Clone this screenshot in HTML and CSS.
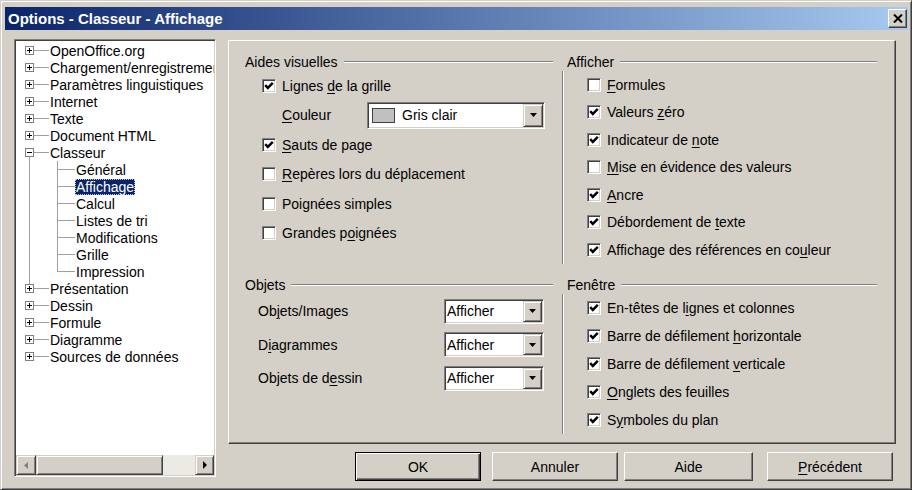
FILE: index.html
```html
<!DOCTYPE html>
<html lang="fr">
<head>
<meta charset="utf-8">
<title>Options - Classeur - Affichage</title>
<link rel="stylesheet" href="styles.css">
</head>
<body>
<div class="window">
  <div class="titlebar">
    <span class="title">Options - Classeur - Affichage</span>
    <span class="close"><svg width="10" height="9" viewBox="0 0 10 9"><path d="M1 0.5 L9 8.5 M9 0.5 L1 8.5" stroke="#000" stroke-width="2" fill="none"/></svg></span>
  </div>
  <div class="client">
    <div class="tree">
      <div class="tree-list">
        <div class="row"><span class="exp"><span class="box"><svg width="7" height="7" viewBox="0 0 7 7"><rect x="1" y="3" width="5" height="1"/><rect x="3" y="1" width="1" height="5"/></svg></span></span><span class="hl"></span><span class="lbl">OpenOffice.org</span></div>
        <div class="row"><span class="exp"><span class="box"><svg width="7" height="7" viewBox="0 0 7 7"><rect x="1" y="3" width="5" height="1"/><rect x="3" y="1" width="1" height="5"/></svg></span></span><span class="hl"></span><span class="lbl">Chargement/enregistrement</span></div>
        <div class="row"><span class="exp"><span class="box"><svg width="7" height="7" viewBox="0 0 7 7"><rect x="1" y="3" width="5" height="1"/><rect x="3" y="1" width="1" height="5"/></svg></span></span><span class="hl"></span><span class="lbl">Paramètres linguistiques</span></div>
        <div class="row"><span class="exp"><span class="box"><svg width="7" height="7" viewBox="0 0 7 7"><rect x="1" y="3" width="5" height="1"/><rect x="3" y="1" width="1" height="5"/></svg></span></span><span class="hl"></span><span class="lbl">Internet</span></div>
        <div class="row"><span class="exp"><span class="box"><svg width="7" height="7" viewBox="0 0 7 7"><rect x="1" y="3" width="5" height="1"/><rect x="3" y="1" width="1" height="5"/></svg></span></span><span class="hl"></span><span class="lbl">Texte</span></div>
        <div class="row"><span class="exp"><span class="box"><svg width="7" height="7" viewBox="0 0 7 7"><rect x="1" y="3" width="5" height="1"/><rect x="3" y="1" width="1" height="5"/></svg></span></span><span class="hl"></span><span class="lbl">Document HTML</span></div>
        <div class="row"><span class="exp down"><span class="box"><svg width="7" height="7" viewBox="0 0 7 7"><rect x="1" y="3" width="5" height="1"/></svg></span></span><span class="hl"></span><span class="lbl">Classeur</span></div>
        <div class="row"><span class="vg"></span><span class="br"></span><span class="lbl">Général</span></div>
        <div class="row"><span class="vg"></span><span class="br"></span><span class="lbl sel">Affichage</span></div>
        <div class="row"><span class="vg"></span><span class="br"></span><span class="lbl">Calcul</span></div>
        <div class="row"><span class="vg"></span><span class="br"></span><span class="lbl">Listes de tri</span></div>
        <div class="row"><span class="vg"></span><span class="br"></span><span class="lbl">Modifications</span></div>
        <div class="row"><span class="vg"></span><span class="br"></span><span class="lbl">Grille</span></div>
        <div class="row"><span class="vg"></span><span class="br last"></span><span class="lbl">Impression</span></div>
        <div class="row"><span class="exp up"><span class="box"><svg width="7" height="7" viewBox="0 0 7 7"><rect x="1" y="3" width="5" height="1"/><rect x="3" y="1" width="1" height="5"/></svg></span></span><span class="hl"></span><span class="lbl">Présentation</span></div>
        <div class="row"><span class="exp"><span class="box"><svg width="7" height="7" viewBox="0 0 7 7"><rect x="1" y="3" width="5" height="1"/><rect x="3" y="1" width="1" height="5"/></svg></span></span><span class="hl"></span><span class="lbl">Dessin</span></div>
        <div class="row"><span class="exp"><span class="box"><svg width="7" height="7" viewBox="0 0 7 7"><rect x="1" y="3" width="5" height="1"/><rect x="3" y="1" width="1" height="5"/></svg></span></span><span class="hl"></span><span class="lbl">Formule</span></div>
        <div class="row"><span class="exp"><span class="box"><svg width="7" height="7" viewBox="0 0 7 7"><rect x="1" y="3" width="5" height="1"/><rect x="3" y="1" width="1" height="5"/></svg></span></span><span class="hl"></span><span class="lbl">Diagramme</span></div>
        <div class="row"><span class="exp"><span class="box"><svg width="7" height="7" viewBox="0 0 7 7"><rect x="1" y="3" width="5" height="1"/><rect x="3" y="1" width="1" height="5"/></svg></span></span><span class="hl"></span><span class="lbl">Sources de données</span></div>
      </div>
      <div class="hscroll">
        <span class="sb-btn sb-left"><svg width="4" height="7" viewBox="0 0 4 7"><path d="M4 0 L0 3.5 L4 7 Z" fill="#808080"/></svg></span>
        <span class="thumb"></span>
        <span class="track"></span>
        <span class="sb-btn sb-right"><svg width="4" height="8" viewBox="0 0 4 8"><path d="M0 0 L4 4 L0 8 Z" fill="#000"/></svg></span>
      </div>
    </div>

    <div class="main">
      <div class="panel">
        <div class="group">
          <div class="gh">Aides visuelles</div>
          <div class="gbody gbody-left">
            <div class="crow crow-l"><span class="cb on"><svg width="10" height="10" viewBox="0 0 10 10"><path d="M1.2 4.1 L3.8 6.9 L8.8 1.8" stroke="#000" stroke-width="2.4" fill="none"/></svg></span><span>Lignes <u>d</u>e la grille</span></div>
            <div class="crow crow-l"><span class="clabel"><u>C</u>ouleur</span>
              <span class="combo combo-color"><span class="cval"><span class="swatch"></span>Gris clair</span><span class="cbtn"><svg width="7" height="4" viewBox="0 0 7 4"><path d="M0 0 H7 L3.5 4 Z" fill="#000"/></svg></span></span>
            </div>
            <div class="crow crow-l"><span class="cb on"><svg width="10" height="10" viewBox="0 0 10 10"><path d="M1.2 4.1 L3.8 6.9 L8.8 1.8" stroke="#000" stroke-width="2.4" fill="none"/></svg></span><span><u>S</u>auts de page</span></div>
            <div class="crow crow-l"><span class="cb"></span><span><u>R</u>epères lors du déplacement</span></div>
            <div class="crow crow-l"><span class="cb"></span><span>Poi<u>g</u>nées simples</span></div>
            <div class="crow crow-l"><span class="cb"></span><span>Grandes p<u>o</u>ignées</span></div>
          </div>
        </div>

        <div class="group group-right">
          <div class="gh">Afficher</div>
          <div class="gbody gbody-right">
            <div class="crow crow-r"><span class="cb"></span><span><u>F</u>ormules</span></div>
            <div class="crow crow-r"><span class="cb on"><svg width="10" height="10" viewBox="0 0 10 10"><path d="M1.2 4.1 L3.8 6.9 L8.8 1.8" stroke="#000" stroke-width="2.4" fill="none"/></svg></span><span>Valeurs <u>z</u>éro</span></div>
            <div class="crow crow-r"><span class="cb on"><svg width="10" height="10" viewBox="0 0 10 10"><path d="M1.2 4.1 L3.8 6.9 L8.8 1.8" stroke="#000" stroke-width="2.4" fill="none"/></svg></span><span>Indicateur de <u>n</u>ote</span></div>
            <div class="crow crow-r"><span class="cb"></span><span><u>M</u>ise en évidence des valeurs</span></div>
            <div class="crow crow-r"><span class="cb on"><svg width="10" height="10" viewBox="0 0 10 10"><path d="M1.2 4.1 L3.8 6.9 L8.8 1.8" stroke="#000" stroke-width="2.4" fill="none"/></svg></span><span><u>A</u>ncre</span></div>
            <div class="crow crow-r"><span class="cb on"><svg width="10" height="10" viewBox="0 0 10 10"><path d="M1.2 4.1 L3.8 6.9 L8.8 1.8" stroke="#000" stroke-width="2.4" fill="none"/></svg></span><span>Débordement de <u>t</u>exte</span></div>
            <div class="crow crow-r"><span class="cb on"><svg width="10" height="10" viewBox="0 0 10 10"><path d="M1.2 4.1 L3.8 6.9 L8.8 1.8" stroke="#000" stroke-width="2.4" fill="none"/></svg></span><span>Affichage des références en co<u>u</u>leur</span></div>
          </div>
        </div>

        <div class="group">
          <div class="gh">Objets</div>
          <div class="gbody gbody-obj">
            <div class="orow"><span class="olabel">Ob<u>j</u>ets/Images</span><span class="combo combo-sm"><span class="cval">Afficher</span><span class="cbtn"><svg width="7" height="4" viewBox="0 0 7 4"><path d="M0 0 H7 L3.5 4 Z" fill="#000"/></svg></span></span></div>
            <div class="orow"><span class="olabel">D<u>i</u>agrammes</span><span class="combo combo-sm"><span class="cval">Afficher</span><span class="cbtn"><svg width="7" height="4" viewBox="0 0 7 4"><path d="M0 0 H7 L3.5 4 Z" fill="#000"/></svg></span></span></div>
            <div class="orow"><span class="olabel">Objets de d<u>e</u>ssin</span><span class="combo combo-sm"><span class="cval">Afficher</span><span class="cbtn"><svg width="7" height="4" viewBox="0 0 7 4"><path d="M0 0 H7 L3.5 4 Z" fill="#000"/></svg></span></span></div>
          </div>
        </div>

        <div class="group group-right">
          <div class="gh">Fenêtre</div>
          <div class="gbody gbody-right">
            <div class="crow crow-f"><span class="cb on"><svg width="10" height="10" viewBox="0 0 10 10"><path d="M1.2 4.1 L3.8 6.9 L8.8 1.8" stroke="#000" stroke-width="2.4" fill="none"/></svg></span><span>En-têtes de l<u>i</u>gnes et colonnes</span></div>
            <div class="crow crow-f"><span class="cb on"><svg width="10" height="10" viewBox="0 0 10 10"><path d="M1.2 4.1 L3.8 6.9 L8.8 1.8" stroke="#000" stroke-width="2.4" fill="none"/></svg></span><span>Barre de défilement <u>h</u>orizontale</span></div>
            <div class="crow crow-f"><span class="cb on"><svg width="10" height="10" viewBox="0 0 10 10"><path d="M1.2 4.1 L3.8 6.9 L8.8 1.8" stroke="#000" stroke-width="2.4" fill="none"/></svg></span><span>Barre de défilement <u>v</u>erticale</span></div>
            <div class="crow crow-f"><span class="cb on"><svg width="10" height="10" viewBox="0 0 10 10"><path d="M1.2 4.1 L3.8 6.9 L8.8 1.8" stroke="#000" stroke-width="2.4" fill="none"/></svg></span><span><u>O</u>nglets des feuilles</span></div>
            <div class="crow crow-f"><span class="cb on"><svg width="10" height="10" viewBox="0 0 10 10"><path d="M1.2 4.1 L3.8 6.9 L8.8 1.8" stroke="#000" stroke-width="2.4" fill="none"/></svg></span><span>S<u>y</u>mboles du plan</span></div>
          </div>
        </div>
      </div>

      <div class="buttons">
        <span class="btn btn-ok">OK</span>
        <span class="btn btn-cancel">Annuler</span>
        <span class="btn btn-help">Aide</span>
        <span class="btn btn-back"><span><u>P</u>récédent</span></span>
      </div>
    </div>
  </div>
</div>
</body>
</html>
```

FILE: styles.css
```css
* { box-sizing: border-box; }
html, body { margin: 0; padding: 0; }
body {
  width: 912px;
  height: 490px;
  overflow: hidden;
  background: #d4d0c8;
  font-family: "Liberation Sans", Arial, sans-serif;
  font-size: 14px;
  color: #000;
}
u { text-decoration: underline; text-underline-offset: 2px; }

.window {
  width: 912px;
  height: 490px;
  display: flex;
  flex-direction: column;
  background: #d4d0c8;
  border: 1px solid;
  border-color: #d4d0c8 #404040 #404040 #d4d0c8;
  box-shadow: inset 1px 1px #fff, inset -1px -1px #808080;
  padding: 6px 3px 2px 4px;
}

/* title bar */
.titlebar {
  height: 23px;
  flex: none;
  display: flex;
  align-items: center;
  padding-left: 3px;
  background: linear-gradient(to right, #0a246a, #a6caf0);
}
.title {
  color: #fff;
  font-weight: bold;
  font-size: 15px;
  white-space: nowrap;
}
.close {
  margin-left: auto;
  margin-right: 1px;
  width: 19px;
  height: 19px;
  display: flex;
  align-items: center;
  justify-content: center;
  background: #d4d0c8;
  border: 1px solid;
  border-color: #fff #404040 #404040 #fff;
  box-shadow: inset -1px -1px #808080;
}

/* client area */
.client {
  flex: 1;
  display: flex;
  padding: 9px 0 0 9px;
}

/* tree */
.tree {
  width: 202px;
  height: 438px;
  flex: none;
  display: flex;
  flex-direction: column;
  background: #fff;
  border: 1px solid;
  border-color: #808080 #fff #fff #808080;
  box-shadow: inset 1px 1px #404040, inset -1px -1px #d4d0c8;
  padding: 1px;
}
.tree-list {
  flex: 1;
  overflow: hidden;
  padding-top: 1px;
}
.row {
  height: 17px;
  display: flex;
  align-items: center;
  white-space: nowrap;
}
.exp {
  flex: none;
  width: 9px;
  height: 17px;
  margin-left: 9px;
  display: flex;
  align-items: center;
  justify-content: center;
}
.exp.down {
  background: linear-gradient(#a0a0a0, #a0a0a0) 4px 100% / 1px 50% no-repeat;
}
.exp.up {
  background: linear-gradient(#a0a0a0, #a0a0a0) 4px 0 / 1px 50% no-repeat;
}
.box {
  width: 9px;
  height: 9px;
  border: 1px solid #808080;
  background: #fff;
  display: flex;
}
.box svg { display: block; fill: #000; }
.hl {
  flex: none;
  width: 15px;
  height: 1px;
  background: #a0a0a0;
}
.lbl {
  padding: 0 1px;
  line-height: 16px;
}
.lbl.sel {
  background: #0a246a;
  color: #fff;
  outline: 1px dotted #c8c8c8;
  outline-offset: -1px;
}
.vg {
  flex: none;
  width: 28px;
  height: 17px;
  margin-left: 13px;
  border-left: 1px solid #a0a0a0;
}
.br {
  flex: none;
  width: 18px;
  height: 17px;
  background:
    linear-gradient(#a0a0a0, #a0a0a0) 0 0 / 1px 100% no-repeat,
    linear-gradient(#a0a0a0, #a0a0a0) 0 8px / 100% 1px no-repeat;
}
.br.last {
  background:
    linear-gradient(#a0a0a0, #a0a0a0) 0 0 / 1px 9px no-repeat,
    linear-gradient(#a0a0a0, #a0a0a0) 0 8px / 100% 1px no-repeat;
}

/* scrollbar */
.hscroll {
  flex: none;
  height: 20px;
  display: flex;
}
.sb-btn, .thumb {
  background: #d4d0c8;
  border: 1px solid;
  border-color: #d4d0c8 #404040 #404040 #d4d0c8;
  box-shadow: inset 1px 1px #fff, inset -1px -1px #808080;
}
.sb-btn {
  display: flex;
  align-items: center;
  justify-content: center;
}
.sb-left { width: 20px; }
.sb-right { width: 19px; }
.thumb { width: 127px; }
.track {
  flex: 1;
  background: #eceae5;
}

/* right side */
.main {
  width: 668px;
  margin-left: 12px;
  display: flex;
  flex-direction: column;
}
.panel {
  height: 404px;
  margin-top: 1px;
  border: 1px solid;
  border-color: #fff #404040 #404040 #fff;
  box-shadow: inset -1px -1px #808080;
  padding: 12px 18px 0 16px;
  display: grid;
  grid-template-columns: 308px 315px;
  column-gap: 9px;
  row-gap: 12px;
  align-content: start;
}
.gh {
  height: 18px;
  display: flex;
  align-items: center;
  white-space: nowrap;
}
.gh::after {
  content: "";
  flex: 1;
  margin-left: 6px;
  border-top: 1px solid #808080;
  border-bottom: 1px solid #fff;
}
.group-right .gh { padding-left: 5px; }

.gbody-left { padding-left: 17px; }
.gbody-right {
  border-left: 1px solid #808080;
  box-shadow: inset 1px 0 #fff;
  padding-left: 24px;
}
.gbody-obj { padding: 1px 0 0 13px; }

.crow {
  display: flex;
  align-items: center;
  white-space: nowrap;
}
.crow-l { height: 29.5px; }
.crow-r { height: 27.5px; }
.crow-f { height: 28px; }

.cb {
  flex: none;
  width: 14px;
  height: 14px;
  margin-right: 6px;
  background: #fff;
  border: 1px solid;
  border-color: #808080 #fff #fff #808080;
  box-shadow: inset 1px 1px #404040, inset -1px -1px #d4d0c8;
  padding: 1px;
  display: flex;
  align-items: center;
  justify-content: center;
}
.cb svg { display: block; }

.clabel {
  width: 85px;
  margin-left: 20px;
  flex: none;
}

.combo {
  display: flex;
  background: #fff;
  border: 1px solid;
  border-color: #808080 #fff #fff #808080;
  box-shadow: inset 1px 1px #404040, inset -1px -1px #d4d0c8;
  padding: 1px;
}
.combo-color { width: 178px; height: 27px; }
.combo-sm { width: 100px; height: 25px; }
.cval {
  flex: 1;
  display: flex;
  align-items: center;
  padding-left: 1px;
  white-space: nowrap;
  overflow: hidden;
}
.combo-color .cval { padding-left: 3px; }
.swatch {
  width: 23px;
  height: 15px;
  margin-right: 7px;
  border: 1px solid #404040;
  background: #c0c0c0;
  flex: none;
}
.cbtn {
  width: 20px;
  flex: none;
  display: flex;
  align-items: center;
  justify-content: center;
  background: #d4d0c8;
  border: 1px solid;
  border-color: #d4d0c8 #404040 #404040 #d4d0c8;
  box-shadow: inset 1px 1px #fff, inset -1px -1px #808080;
}
.combo-sm .cbtn { width: 19px; }

.orow {
  height: 33.5px;
  display: flex;
  align-items: center;
  white-space: nowrap;
}
.olabel { width: 186px; flex: none; }

/* dialog buttons */
.buttons {
  margin-top: 8px;
  height: 29px;
  display: flex;
}
.btn {
  height: 29px;
  width: 126px;
  display: flex;
  align-items: center;
  justify-content: center;
  background: #d4d0c8;
  border: 1px solid;
  border-color: #fff #404040 #404040 #fff;
  box-shadow: inset -1px -1px #808080;
}
.btn-ok {
  margin-left: 127px;
  border-color: #000;
  box-shadow: inset 1px 1px #fff, inset -1px -1px #404040, inset -2px -2px #808080;
}
.btn-cancel { margin-left: 11px; }
.btn-help { margin-left: 6px; width: 129px; }
.btn-back { margin-left: 14px; }
```
